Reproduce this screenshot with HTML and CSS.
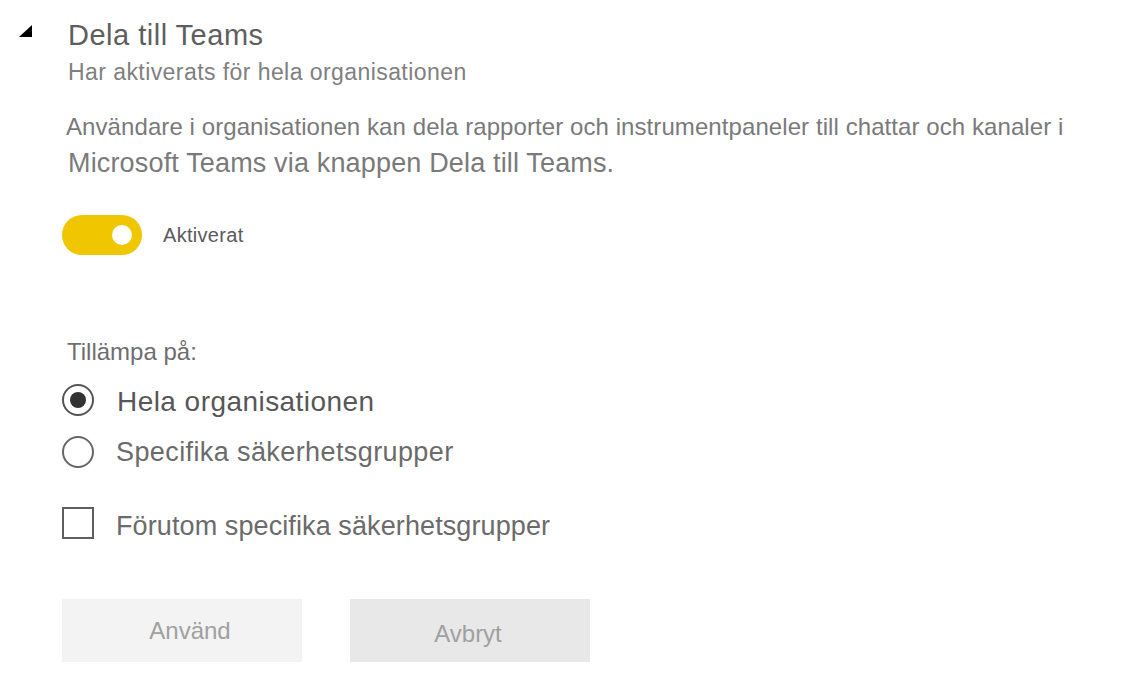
FILE: index.html
```html
<!DOCTYPE html>
<html lang="sv">
<head>
<meta charset="utf-8">
<title>Dela till Teams</title>
<link rel="stylesheet" href="styles.css">
</head>
<body>
<div class="page">
  <div class="header">
    <svg class="caret" width="13" height="12" viewBox="0 0 13 12"><polygon points="13,0 13,12 0,12" fill="#000"/></svg>
    <h1 class="title">Dela till Teams</h1>
  </div>
  <div class="content">
    <div class="subtitle">Har aktiverats för hela organisationen</div>
    <div class="desc">
      <div class="desc-l1">Användare i organisationen kan dela rapporter och instrumentpaneler till chattar och kanaler i</div>
      <div class="desc-l2">Microsoft Teams via knappen Dela till Teams.</div>
    </div>
    <div class="toggle-row">
      <div class="toggle"><span class="knob"></span></div>
      <span class="toggle-label">Aktiverat</span>
    </div>
    <div class="apply-label">Tillämpa på:</div>
    <div class="options">
      <div class="opt">
        <span class="radio checked"><span class="dot"></span></span>
        <span class="opt-label strong">Hela organisationen</span>
      </div>
      <div class="opt">
        <span class="radio"></span>
        <span class="opt-label">Specifika säkerhetsgrupper</span>
      </div>
      <div class="opt check-opt">
        <span class="checkbox"></span>
        <span class="opt-label low">Förutom specifika säkerhetsgrupper</span>
      </div>
    </div>
    <div class="buttons">
      <div class="btn btn-apply">Använd</div>
      <div class="btn btn-cancel">Avbryt</div>
    </div>
  </div>
</div>
</body>
</html>
```

FILE: styles.css
```css
html, body {
  margin: 0;
  padding: 0;
  background: #fff;
}
body {
  font-family: "Liberation Sans", Arial, sans-serif;
  color: #666;
}
.page {
  padding-top: 17px;
  width: 1145px;
  height: 695px;
  box-sizing: border-box;
}
.header {
  display: flex;
  align-items: flex-start;
}
.caret {
  margin-left: 19px;
  margin-top: 8px;
  flex: none;
}
.title {
  margin: 0 0 0 36px;
  font-size: 29px;
  line-height: 36px;
  font-weight: normal;
  color: #5e5e5e;
  letter-spacing: 0.5px;
}
.content {
  padding-left: 62px;
}
.subtitle {
  margin-top: 4px;
  margin-left: 6px;
  font-size: 23px;
  line-height: 30px;
  color: #808080;
  letter-spacing: 0.43px;
}
.desc {
  margin-top: 21px;
  margin-left: 4px;
  color: #7a7a7a;
}
.desc-l1 {
  font-size: 24px;
  line-height: 37px;
  letter-spacing: 0.08px;
}
.desc-l2 {
  font-size: 27px;
  line-height: 37px;
  margin-left: 2px;
  letter-spacing: 0.16px;
}
.toggle-row {
  margin-top: 33px;
  display: flex;
  align-items: center;
}
.toggle {
  width: 80px;
  height: 40px;
  border-radius: 20px;
  background: #efc600;
  display: flex;
  align-items: center;
  justify-content: flex-end;
  padding-right: 10px;
  box-sizing: border-box;
}
.knob {
  width: 20px;
  height: 20px;
  border-radius: 50%;
  background: #fff;
}
.toggle-label {
  margin-left: 21px;
  font-size: 20px;
  color: #5a5a5a;
  letter-spacing: 0.3px;
}
.apply-label {
  margin-top: 82px;
  margin-left: 5px;
  font-size: 24px;
  line-height: 30px;
  color: #6e6e6e;
}
.options {
  margin-top: 13px;
  display: flex;
  flex-direction: column;
  gap: 12px;
}
.opt {
  display: flex;
  align-items: center;
  height: 40px;
}
.check-opt {
  margin-top: 19px;
}
.radio {
  width: 32px;
  height: 32px;
  border: 2px solid #666;
  border-radius: 50%;
  box-sizing: border-box;
  display: flex;
  align-items: center;
  justify-content: center;
  flex: none;
}
.radio.checked {
  border-color: #555;
}
.dot {
  width: 16px;
  height: 16px;
  border-radius: 50%;
  background: #333;
}
.checkbox {
  width: 32px;
  height: 32px;
  border: 2px solid #5f5f5f;
  box-sizing: border-box;
  flex: none;
}
.opt-label {
  margin-left: 22px;
  font-size: 27px;
  color: #6b6b6b;
  letter-spacing: 0.4px;
}
.opt-label.strong {
  font-size: 28px;
  color: #575757;
  margin-left: 23px;
  padding-top: 4px;
  letter-spacing: 0.45px;
}
.opt-label.low {
  padding-top: 6px;
  letter-spacing: 0.1px;
}
.buttons {
  margin-top: 56px;
  display: flex;
  gap: 48px;
}
.btn {
  width: 240px;
  height: 63px;
  display: flex;
  align-items: center;
  justify-content: center;
  font-size: 24px;
  color: #a0a0a0;
  box-sizing: border-box;
}
.btn-apply {
  background: #f3f3f3;
  padding-top: 1px;
  padding-left: 16px;
}
.btn-cancel {
  background: #e8e8e8;
  padding-top: 7px;
  padding-right: 4px;
}
```
